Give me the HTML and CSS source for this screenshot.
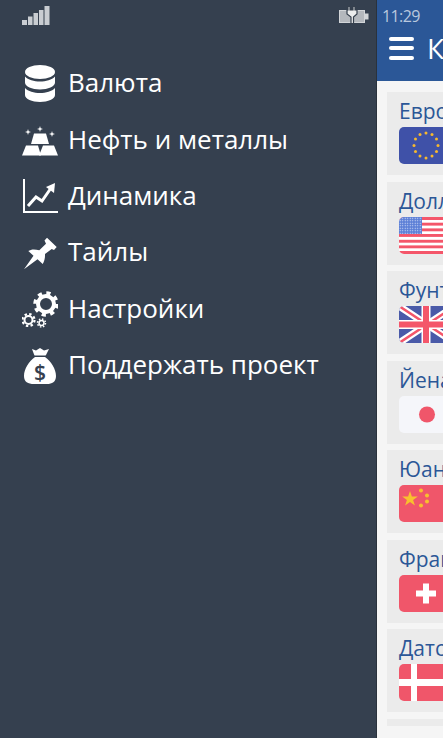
FILE: index.html
```html
<!DOCTYPE html>
<html lang="ru">
<head>
<meta charset="utf-8">
<title>Курсы валют</title>
<link rel="stylesheet" href="styles.css">
</head>
<body>
<div class="app">
  <aside class="drawer">
    <div class="status">
      <svg class="signal" width="28" height="19" viewBox="0 0 28 19"><g fill="#c9cdd2"><rect x="0" y="14" width="5" height="5"/><rect x="6" y="10.5" width="4.500" height="8.500"/><rect x="11.500" y="7" width="4.500" height="12"/><rect x="17" y="4" width="4.500" height="15"/><rect x="22.500" y="0" width="5" height="19"/></g></svg>
      <svg class="battery" width="31" height="18" viewBox="0 0 31 18"><rect x="1.500" y="4.500" width="25" height="12" fill="#b4b8bd" stroke="#d2d5d8"/><rect x="27" y="7.500" width="3.500" height="6" fill="#d2d5d8"/><path fill="#eceded" stroke="#36404d" stroke-width="1.200" d="M10 .5h2v3.500h3V.5h2V4h2v4l-3.500 3v6.500h-2.500V11L9 8V4h1z"/></svg>
    </div>
    <nav class="menu">
      <a class="item">
        <svg class="icon" viewBox="0 0 36 40"><g fill="#fff"><ellipse cx="18" cy="8" rx="15" ry="7"/><path d="M3 12.500c3 3.500 9 5 15 5s12-1.500 15-5v6c0 4-7 7-15 7s-15-3-15-7z"/><path d="M3 24c3 3.500 9 5 15 5s12-1.500 15-5v7c0 4-7 7-15 7s-15-3-15-7z"/></g></svg>
        <span>Валюта</span>
      </a>
      <a class="item">
        <svg class="icon" viewBox="0 0 36 40"><g fill="#fff"><path d="M12 12.500h12l3 10.500H9z"/><path d="M4 24.500h12l3 10H0z"/><path d="M21 24.500h11l4 10H17z"/><path d="M6 8l.7 2.300L9 11l-2.300.7L6 14l-.7-2.300L3 11l2.300-.7zM18 5l.7 2.300L21 8l-2.300.7L18 11l-.7-2.300L15 8l2.300-.7zM30 10l.7 2.300 2.300.7-2.300.7-.7 2.300-.7-2.300-2.300-.7 2.300-.7z"/></g></svg>
        <span>Нефть и металлы</span>
      </a>
      <a class="item">
        <svg class="icon" viewBox="0 0 36 40"><path d="M2 2v33h34" fill="none" stroke="#fff" stroke-width="2"/><path d="M6 29l8-9 6 4 9-13" fill="none" stroke="#fff" stroke-width="3"/><path d="M24 10l9-4-1 10z" fill="#fff"/></svg>
        <span>Динамика</span>
      </a>
      <a class="item">
        <svg class="icon" viewBox="0 0 36 40"><path fill="#fff" d="M2 36.300L15.500 26.300 20.700 31C22.500 28 23.200 24.500 23 21L29.700 16 32 17 34.700 14 25 4.700 22.500 7.500 24 10.700 17.300 17.300C13 16 9 16 6.300 18L11.500 22.700z"/></svg>
        <span>Тайлы</span>
      </a>
      <a class="item">
        <svg class="icon" viewBox="0 0 36 40"><g fill="none" stroke="#fff"><circle cx="24" cy="14" r="8" stroke-width="4"/><circle cx="24" cy="14" r="11" stroke-width="3.500" stroke-dasharray="4.200 4.440"/><circle cx="6.500" cy="30" r="4" stroke-width="2"/><circle cx="6.500" cy="30" r="6" stroke-width="2.200" stroke-dasharray="2.400 2.310"/><circle cx="19.500" cy="33" r="2.500" stroke-width="1.500"/><circle cx="19.500" cy="33" r="4" stroke-width="1.500" stroke-dasharray="1.500 1.640"/></g></svg>
        <span>Настройки</span>
      </a>
      <a class="item">
        <svg class="icon" viewBox="0 0 36 40"><path fill="#fff" d="M10 3l4 1.500L18 2l4 2.500L27 3l-4 8c6 4 11 12 11 19 0 6-4 8-9 8H12c-6 0-10-2-10-8 0-7 5-15 11-19z"/><path fill="#35404f" d="M12 9.500h12v1.500H12z"/><text class="dollar" x="18" y="34" text-anchor="middle">$</text></svg>
        <span>Поддержать проект</span>
      </a>
    </nav>
  </aside>
  <main class="main">
    <header class="header">
      <div class="time">11:29</div>
      <div class="titlebar">
        <div class="burger"><i></i><i></i><i></i></div>
        <h1 class="title">Курсы валют</h1>
      </div>
    </header>
    <section class="list">
      <div class="card">
        <div class="name">Евро</div>
        <svg class="flag" viewBox="0 0 56 37"><rect width="56" height="37" fill="#3f51a8"/><g fill="#f7b82e"><circle cx="27" cy="6" r="1.500"/><circle cx="33" cy="7.500" r="1.500"/><circle cx="37.500" cy="12" r="1.500"/><circle cx="39" cy="18.500" r="1.500"/><circle cx="37.500" cy="24.500" r="1.500"/><circle cx="33" cy="29" r="1.500"/><circle cx="27" cy="31" r="1.500"/><circle cx="21" cy="29" r="1.500"/><circle cx="16.500" cy="24.500" r="1.500"/><circle cx="15" cy="18.500" r="1.500"/><circle cx="16.500" cy="12" r="1.500"/><circle cx="21" cy="7.500" r="1.500"/></g></svg>
      </div>
      <div class="card">
        <div class="name">Доллар США</div>
        <svg class="flag" viewBox="0 0 56 37"><defs><pattern id="stars" width="2.500" height="2.500" patternUnits="userSpaceOnUse"><circle cx="1.200" cy="1.200" r=".6" fill="#dfe6fa"/></pattern></defs><rect width="56" height="37" fill="#fff"/><g fill="#f4566a"><rect width="56" height="3"/><rect y="5.700" width="56" height="2.900"/><rect y="11.400" width="56" height="2.900"/><rect y="17" width="56" height="2.900"/><rect y="22.800" width="56" height="2.900"/><rect y="28.400" width="56" height="2.900"/><rect y="34" width="56" height="3"/></g><rect width="23" height="17" fill="#5b7fd6"/><rect width="23" height="17" fill="url(#stars)"/></svg>
      </div>
      <div class="card">
        <div class="name">Фунт стерлингов</div>
        <svg class="flag" viewBox="0 0 56 37"><rect width="56" height="37" fill="#4a5aa8"/><path d="M0 0l56 37M56 0L0 37" stroke="#fff" stroke-width="7"/><path d="M0 0l56 37M56 0L0 37" stroke="#f4566a" stroke-width="2.500"/><path d="M27 0v37M0 18.500h56" stroke="#fff" stroke-width="9"/><path d="M27 0v37M0 18.500h56" stroke="#f4566a" stroke-width="6"/></svg>
      </div>
      <div class="card">
        <div class="name">Йена</div>
        <svg class="flag" viewBox="0 0 56 37"><rect width="56" height="37" fill="#f5f6fa"/><circle cx="28" cy="18.500" r="8" fill="#f0566a"/></svg>
      </div>
      <div class="card">
        <div class="name">Юань</div>
        <svg class="flag" viewBox="0 0 56 37"><rect width="56" height="37" fill="#f0566a"/><g fill="#f8c02e"><path d="M11 6l1.900 5.400h5.900l-4.700 3.500 1.800 5.600-4.900-3.400-4.900 3.400 1.800-5.600-4.700-3.500h5.900z"/><circle cx="22" cy="5.500" r="2"/><circle cx="28" cy="10.500" r="2"/><circle cx="28" cy="16.500" r="2"/><circle cx="22" cy="20.500" r="2"/></g></svg>
      </div>
      <div class="card">
        <div class="name">Франк</div>
        <svg class="flag" viewBox="0 0 56 37"><rect width="56" height="37" fill="#f0566a"/><path d="M24 8.500h6v7h7v6h-7v7h-6v-7h-7v-6h7z" fill="#fff"/></svg>
      </div>
      <div class="card">
        <div class="name">Датская крона</div>
        <svg class="flag" viewBox="0 0 56 37"><rect width="56" height="37" fill="#f0566a"/><path d="M12 0h6v37h-6zM0 15h56v7H0z" fill="#fff"/></svg>
      </div>
      <div class="card stub"></div>
    </section>
  </main>
</div>
</body>
</html>
```

FILE: styles.css
```css
html, body {
  margin: 0;
  padding: 0;
  height: 100%;
  overflow: hidden;
}
body {
  font-family: "Open Sans", "Noto Sans", sans-serif;
}
.app {
  display: flex;
  width: 443px;
  height: 738px;
  overflow: hidden;
}
.drawer {
  flex: 0 0 376px;
  background: #35404f;
  border-right: 1px solid #2a323c;
  color: #fff;
}
.status {
  display: flex;
  justify-content: space-between;
  align-items: flex-start;
  height: 56px;
  padding: 0 7px 0 22px;
}
.signal {
  margin-top: 6px;
}
.battery {
  margin-top: 6px;
}
.menu {
  display: flex;
  flex-direction: column;
}
.item {
  display: flex;
  align-items: center;
  height: 56.4px;
  padding-left: 22px;
  gap: 10px;
  font-size: 26px;
}
.item span {
  line-height: 32px;
  margin-bottom: 4px;
}
.icon {
  width: 36px;
  height: 40px;
  flex: none;
}
.dollar {
  font-family: "Open Sans", sans-serif;
  font-size: 21px;
  font-weight: 600;
  fill: #35404f;
}
.main {
  flex: 1 1 0;
  min-width: 0;
  background: #f5f5f5;
  overflow: hidden;
}
.header {
  height: 81px;
  background: #2b5797;
  color: #fff;
  box-sizing: border-box;
  padding: 5px 0 0 12px;
  overflow: hidden;
}
.time {
  font-size: 16px;
  letter-spacing: -0.6px;
  line-height: 22px;
  color: #b9c8de;
  margin-left: -7px;
}
.titlebar {
  display: flex;
  align-items: center;
  gap: 13px;
  height: 42px;
  width: 300px;
}
.burger {
  display: flex;
  flex-direction: column;
  gap: 5.500px;
  width: 25px;
  flex: none;
}
.burger i {
  display: block;
  height: 4px;
  background: #fff;
  border-radius: 2px;
}
.title {
  margin: 0;
  font-size: 28px;
  font-weight: 400;
  white-space: nowrap;
}
.list {
  padding: 11px 0 0 10px;
  display: flex;
  flex-direction: column;
  gap: 6.500px;
  width: 300px;
}
.card {
  height: 83px;
  background: #ebebeb;
  box-sizing: border-box;
  padding: 6px 12px 11px;
  flex: none;
}
.card.stub {
  height: 7px;
  padding: 0;
}
.name {
  font-size: 21px;
  line-height: 27px;
  margin-bottom: 2px;
  color: #2b5797;
  white-space: nowrap;
}
.flag {
  display: block;
  width: 56px;
  height: 37px;
  border-radius: 5px;
}
```
